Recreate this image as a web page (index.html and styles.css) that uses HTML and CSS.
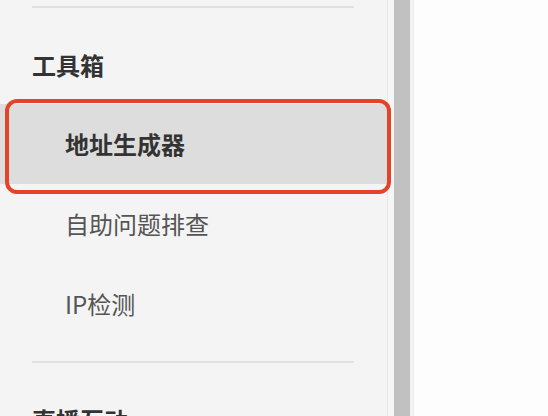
FILE: index.html
```html
<!DOCTYPE html>
<html lang="zh-CN">
<head>
  <meta charset="UTF-8" />
  <meta name="viewport" content="width=device-width, initial-scale=1.0"/>
  <title>工具箱</title>
  <link rel="stylesheet" href="styles.css">
</head>
<body>

  <div class="layout">
    <nav class="sidebar">
      <div class="divider"></div>
      <h2 class="group-title">工具箱</h2>
      <a class="item active" href="#">地址生成器
        <span class="highlight"></span>
      </a>
      <a class="item" href="#">自助问题排查</a>
      <a class="item" href="#">IP检测</a>
      <div class="divider"></div>
      <h2 class="group-title">直播互动</h2>
    </nav>

    <div class="gutter"></div>
    <div class="scrollbar"></div>
    <div class="edge"></div>

    <main class="content"></main>
  </div>

</body>
</html>
```

FILE: styles.css
```css
* {
  box-sizing: border-box;
  margin: 0;
  padding: 0;
}

html, body {
  height: 100%;
  overflow: hidden;
}

body {
  background-color: #fdfdfd;
  color: #333;
  font-family: "Noto Sans CJK SC", "Noto Sans", sans-serif;
}

.layout {
  display: flex;
  height: 100%;
}

.sidebar {
  flex: 0 0 388px;
  background-color: #f4f4f4;
  border-right: 1px solid #e6e6e6;
  position: relative;
}

.divider {
  height: 2px;
  margin: 6px 33px 0 32px;
  background-color: #e0e0e0;
}

.item + .divider {
  margin-top: 17px;
}

.group-title {
  font-size: 24px;
  font-weight: 700;
  line-height: 32px;
  padding: 41px 0 23px 32px;
  color: #333;
}

.item {
  display: block;
  position: relative;
  height: 80px;
  line-height: 80px;
  padding-left: 65px;
  font-size: 24px;
  color: #555;
  text-decoration: none;
}

.item.active {
  background-color: #dddddd;
  color: #333;
  font-weight: 700;
}

.highlight {
  position: absolute;
  left: 5px;
  top: -5px;
  width: 386px;
  height: 95px;
  border: 4px solid #e5422a;
  border-radius: 12px;
}

.gutter {
  flex: 0 0 6px;
  background-color: #f6f6f6;
}

.scrollbar {
  flex: 0 0 16px;
  background-color: #c1c1c1;
}

.edge {
  flex: 0 0 4px;
  background-color: #f3f3f3;
  border-right: 1px solid #ebebeb;
}

.content {
  flex: 1;
  background-color: #fdfdfd;
}
```
